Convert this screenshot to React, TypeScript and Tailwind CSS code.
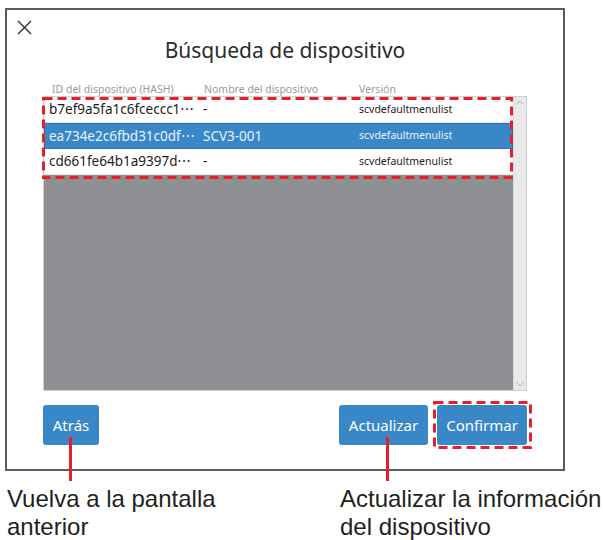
import React from 'react';

interface Device {
  id: string;
  name: string;
  version: string;
}

const devices: Device[] = [
  { id: 'b7ef9a5fa1c6fceccc1', name: '-', version: 'scvdefaultmenulist' },
  { id: 'ea734e2c6fbd31c0df', name: 'SCV3-001', version: 'scvdefaultmenulist' },
  { id: 'cd661fe64b1a9397d', name: '-', version: 'scvdefaultmenulist' },
];

// Marco rojo discontinuo de las anotaciones
const DashedFrame: React.FC<{ w: number; h: number; className: string }> = ({ w, h, className }) => (
  <svg className={className} width={w} height={h} viewBox={`0 0 ${w} ${h}`} fill="none">
    <rect x={1.5} y={1.5} width={w - 3} height={h - 3} stroke="#e4202b" strokeWidth={3} strokeDasharray="9 5" />
  </svg>
);

const App: React.FC = () => {
  const selected = 1;

  return (
    <div className="relative w-[603px] h-[540px] bg-white overflow-hidden font-['Noto_Sans',sans-serif]">
      {/* Diálogo */}
      <div className="ml-[5px] mt-[8px] w-[560px] h-[463px] border-2 border-[#5c5c5c] flex flex-col">
        <button className="ml-[10px] mt-[10px] w-[15px] h-[15px] text-[#333]">
          <svg viewBox="0 0 15 15" className="w-[15px] h-[15px]" stroke="currentColor" strokeWidth={1.4}>
            <line x1="1" y1="1" x2="14" y2="14" />
            <line x1="14" y1="1" x2="1" y2="14" />
          </svg>
        </button>

        <h1 className="mt-[1px] text-center text-[21px] leading-[28px] text-[#2b2b2b]">
          Búsqueda de dispositivo
        </h1>

        {/* Cabecera de columnas */}
        <div className="mt-[19px] ml-[45px] flex h-[13px] text-[10.5px] leading-[12px] text-[#9a9a9a]">
          <span className="w-[152px]">ID del dispositivo (HASH)</span>
          <span className="w-[155px]">Nombre del dispositivo</span>
          <span>Versión</span>
        </div>

        {/* Lista */}
        <div className="relative ml-[36px] w-[484px] h-[295px] border border-[#cfcfcf] flex">
          <div className="flex-1 bg-[#8f9094] flex flex-col">
            {devices.map((d, i) => (
              <div
                key={d.id}
                className={
                  i === selected
                    ? 'h-[26px] flex items-center bg-[#3a87c8] text-[#e9f2fb] outline-1 outline-dotted outline-[#1d5d9b] -outline-offset-1'
                    : 'h-[26px] flex items-center bg-white text-[#1c1c1c] border-b border-[#e6e6e6]'
                }
              >
                <span className="w-[159px] pl-[5px] text-[13.5px] whitespace-nowrap">{d.id}⋯</span>
                <span className="w-[156px] text-[13.5px]">{d.name}</span>
                <span className="text-[10.5px]">{d.version}</span>
              </div>
            ))}
          </div>
          <div className="w-[13px] bg-[#e9e9e9] border-l border-[#dadada] flex flex-col justify-between items-center py-[3px]">
            <svg viewBox="0 0 8 5" className="w-[8px] h-[5px]" fill="none" stroke="#b5b5b5" strokeWidth={1}>
              <polyline points="0.5,4.5 4,1 7.5,4.5" />
            </svg>
            <svg viewBox="0 0 8 5" className="w-[8px] h-[5px]" fill="none" stroke="#b5b5b5" strokeWidth={1}>
              <polyline points="0.5,0.5 4,4 7.5,0.5" />
            </svg>
          </div>
          <DashedFrame w={471} h={82} className="absolute left-[-2px] top-[0px]" />
        </div>

        {/* Botones */}
        <div className="mt-[14px] ml-[36px] mr-[36px] flex text-white text-[15px]">
          <button className="relative w-[56px] h-[40px] rounded-[3px] bg-[#3a87c8]">
            Atrás
            <span className="absolute left-[26px] top-[32px] w-[3px] h-[44px] bg-[#e4202b]" />
          </button>
          <div className="flex-1" />
          <button className="relative w-[89px] h-[40px] rounded-[3px] bg-[#3a87c8]">
            Actualizar
            <span className="absolute left-[47px] top-[32px] w-[3px] h-[44px] bg-[#e4202b]" />
          </button>
          <button className="relative ml-[9px] w-[90px] h-[40px] rounded-[3px] bg-[#3a87c8]">
            Confirmar
            <DashedFrame w={99} h={48} className="absolute left-[-4px] top-[-4px]" />
          </button>
        </div>
      </div>

      {/* Anotaciones */}
      <div className="mt-[14px] flex text-[24px] leading-[28px] text-[#231f20] font-['Liberation_Sans',Arial,sans-serif]">
        <p className="ml-[7px] w-[333px]">
          Vuelva a la pantalla
          <br />
          anterior
        </p>
        <p className="whitespace-nowrap">
          Actualizar la información
          <br />
          del dispositivo
        </p>
      </div>
    </div>
  );
};

export default App;
